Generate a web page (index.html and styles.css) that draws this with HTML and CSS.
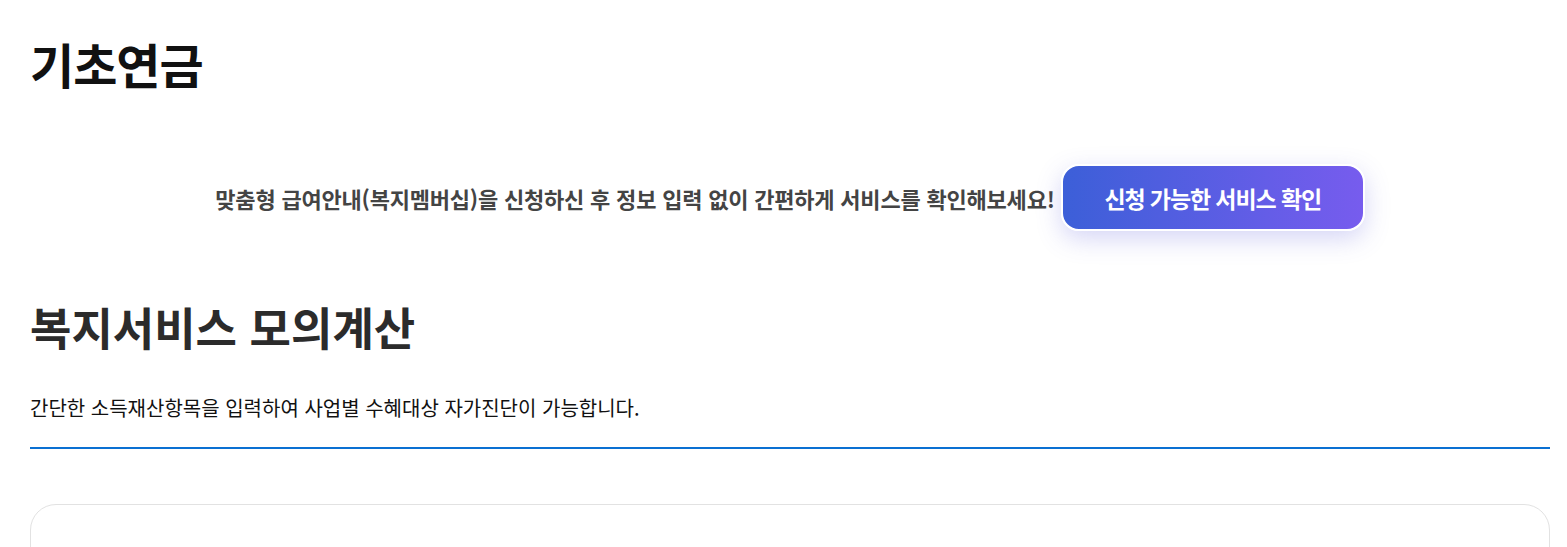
FILE: index.html
```html
<!DOCTYPE html>
<html lang="ko">
<head>
  <meta charset="UTF-8">
  <meta name="viewport" content="width=device-width, initial-scale=1.0">
  <title>기초연금</title>
  <link rel="stylesheet" href="styles.css">
</head>
<body>

<div class="page">
  <h1 class="page-title">기초연금</h1>

  <div class="notice">
    <p class="notice-text">맞춤형 급여안내(복지멤버십)을 신청하신 후 정보 입력 없이 간편하게 서비스를 확인해보세요!</p>
    <button class="notice-btn">신청 가능한 서비스 확인</button>
  </div>

  <div class="section-head">
    <h2 class="section-title">복지서비스 모의계산</h2>
    <p class="section-desc">간단한 소득재산항목을 입력하여 사업별 수혜대상 자가진단이 가능합니다.</p>
  </div>

  <div class="calc-card"></div>
</div>

</body>
</html>
```

FILE: styles.css
```css
body {
  font-family: "Noto Sans CJK KR", "Noto Sans", sans-serif;
  margin: 0;
  background-color: #fff;
  color: #000;
}
.page {
  width: 1520px;
  margin-left: 30px;
  padding-top: 31px;
}
.page-title {
  margin: 0;
  font-size: 48px;
  font-weight: 700;
  line-height: 64px;
  letter-spacing: -1px;
  color: #111;
}
.notice {
  display: flex;
  justify-content: center;
  align-items: center;
  gap: 6px;
  margin-top: 69px;
}
.notice-text {
  margin: 0;
  font-size: 22px;
  font-weight: 700;
  letter-spacing: -0.2px;
  color: #444;
}
.notice-btn {
  font-family: inherit;
  font-size: 23px;
  font-weight: 700;
  letter-spacing: -1.1px;
  color: #fff;
  width: 304px;
  height: 67px;
  border: 2px solid #fff;
  border-radius: 18px;
  background: linear-gradient(90deg, #3c5fd8, #775cee);
  box-shadow: 0 8px 24px rgba(90, 90, 220, 0.25);
  cursor: pointer;
}
.section-head {
  margin-top: 66px;
  padding-bottom: 25px;
  border-bottom: 2px solid #0a70d2;
}
.section-title {
  margin: 0;
  font-size: 45px;
  font-weight: 700;
  line-height: 60px;
  color: #2b2b2b;
}
.section-desc {
  margin: 37px 0 0;
  font-size: 20px;
  line-height: 28px;
  color: #111;
}
.calc-card {
  margin-top: 55px;
  height: 200px;
  border: 1px solid #e2e2e2;
  border-radius: 26px;
}
```
